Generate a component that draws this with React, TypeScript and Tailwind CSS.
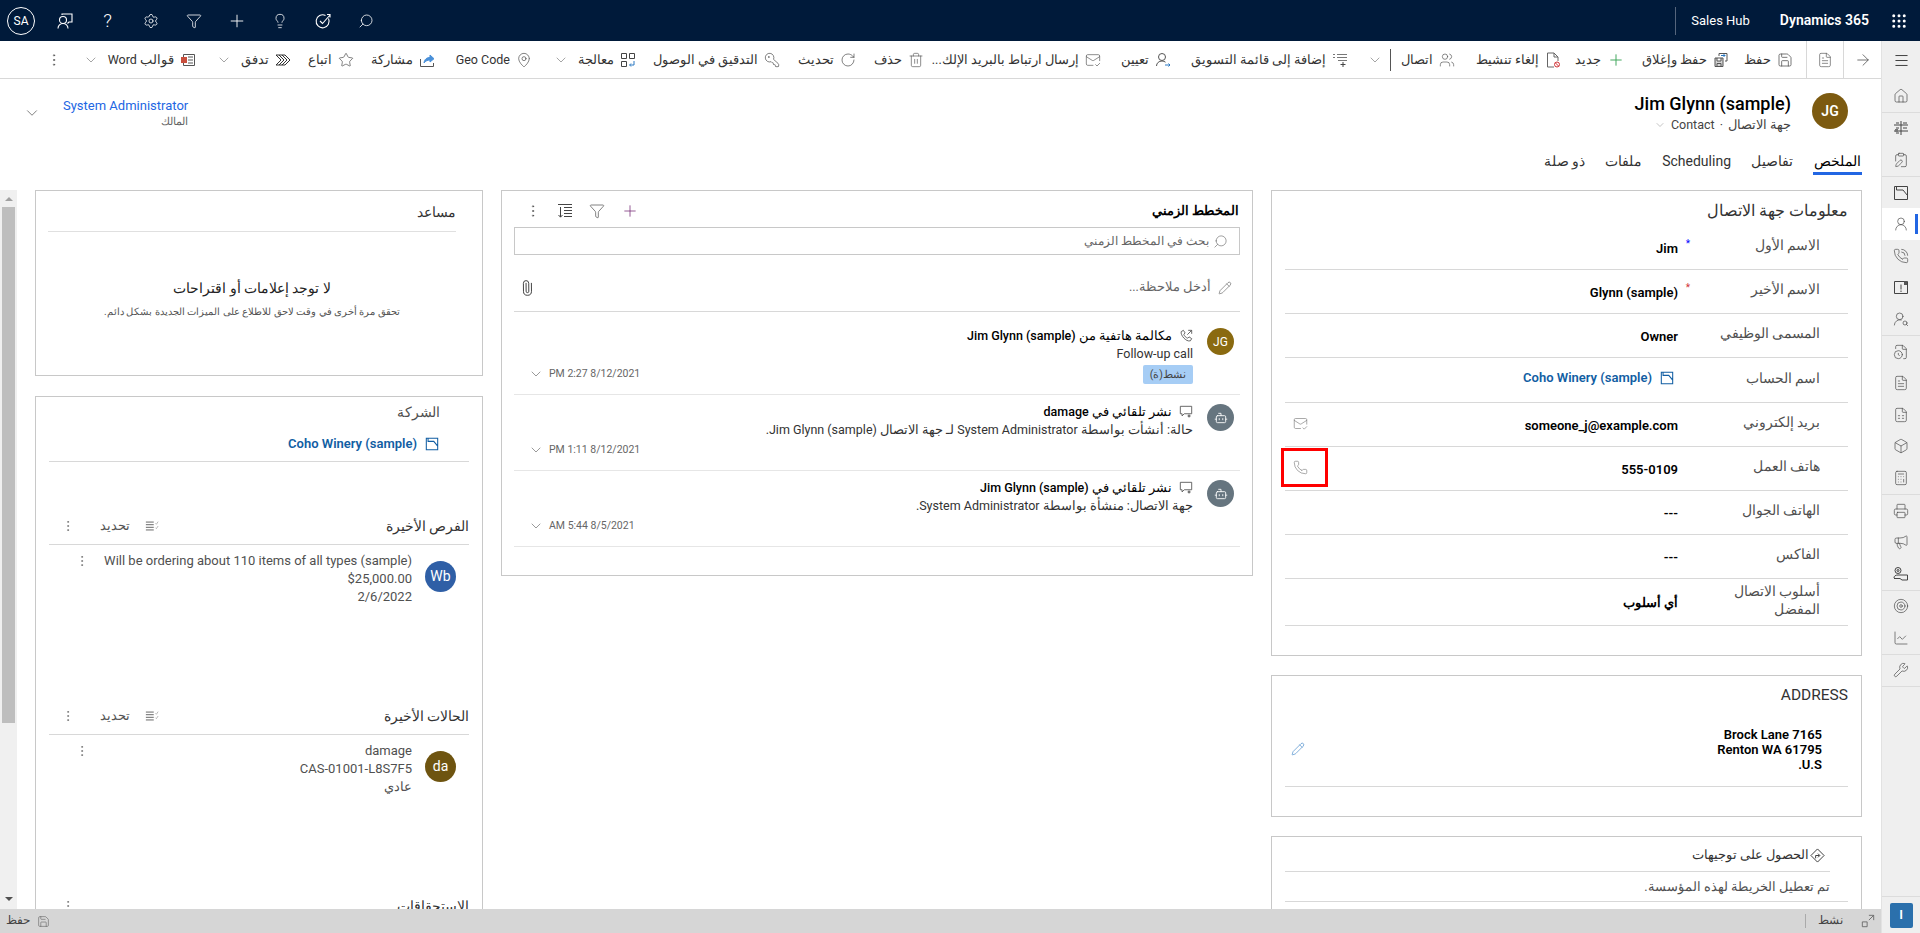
import type { ReactNode } from "react";
import {
  Box,
  Calculator,
  ChartLine,
  ChevronDown,
  EllipsisVertical,
  FileClock,
  FileSpreadsheet,
  FileText,
  Filter,
  Home,
  KeyRound,
  Lightbulb,
  MailCheck,
  MapPin,
  Megaphone,
  Menu,
  Paperclip,
  Pencil,
  Phone,
  PhoneCall,
  Plus,
  RotateCw,
  Save,
  Search,
  Settings,
  Star,
  Target,
  Trash2,
  UserRound,
  UserRoundSearch,
  Users,
  Wrench,
  ClipboardPen,
  Grip,
  ArrowRight,
  Bot,
  Printer,
} from "lucide-react";

function AccountIcon({ className }: { className?: string }) {
  return (
    <svg viewBox="0 0 16 16" className={className} fill="none" stroke="currentColor" strokeWidth="1.2">
      <path d="M1.5 14.5V1.5H14.5V14.5H1.5ZM3.5 1.5V5H10L14.5 10.5" />
    </svg>
  );
}

function ColumnsIcon({ className }: { className?: string }) {
  return (
    <svg viewBox="0 0 16 16" className={className} fill="none" stroke="currentColor" strokeWidth="1">
      <path d="M1 3.500h9M1 6.500h9M1 9.500h9M1 12.500h9" />
      <path d="M12 5l1 1 2-3M12 10l1 1 2-3" stroke="#999" strokeWidth="0.8" />
    </svg>
  );
}

function ProcessIcon() {
  return (
    <svg viewBox="0 0 16 16" className="w-4 h-4" fill="none" stroke="#444" strokeWidth="1">
      <path d="M1.5 1.5h5v5h-5zM1.5 9.5h5v5h-5zM9.500 1.5h5v5h-5z" />
      <path d="M14 9v4h-4M11 11.500 9.500 13l1.500 1.500" stroke="#2b79c2" />
    </svg>
  );
}

function ShareIcon() {
  return (
    <svg viewBox="0 0 16 16" className="w-4 h-4" fill="none" stroke="#555" strokeWidth="1">
      <path d="M1.500 7v7.500h13V11" />
      <path d="M5 11c.5-4 3-5.500 6-5.500V3l4 3.700L11 10V8c-2.500 0-4.500 1-6 3Z" fill="#4a90d9" stroke="#4a90d9" />
    </svg>
  );
}

function FlowIcon() {
  return (
    <svg viewBox="0 0 16 16" className="w-4 h-4" fill="none" stroke="#333" strokeWidth="1">
      <path d="M1 3h9l5 5-5 5H1l5-5-5-5Z" />
      <path d="M4 3l5 5-5 5M7 3l5 5-5 5" />
    </svg>
  );
}

function WordIcon() {
  return (
    <svg viewBox="0 0 16 16" className="w-4 h-4" fill="none" stroke="#555" strokeWidth="1">
      <path d="M3.500 2.500h11v11h-11z" />
      <path d="M8 5h5M8 8h5M8 11h5" />
      <rect x="1" y="5" width="6" height="6" fill="#c94f3d" stroke="none" />
    </svg>
  );
}

function SaveCloseIcon() {
  return (
    <svg viewBox="0 0 16 16" className="w-4 h-4" fill="none" stroke="#555" strokeWidth="1">
      <path d="M2 6h8v8.500H2zM4 6v3h4V6M4 14.500v-3h4v3" fill="#d5d5d5" />
      <path d="M6 4V1.500h8V9h-2" />
      <path d="M8 3.500h4M10.500 2l1.500 1.500L10.500 5" stroke="#2b79c2" />
    </svg>
  );
}

function AssignIcon() {
  return (
    <svg viewBox="0 0 16 16" className="w-4 h-4" fill="none" stroke="#555" strokeWidth="1">
      <circle cx="7" cy="5" r="3.500" />
      <path d="M1.500 14c0-3 2.500-5 5.500-5 1.500 0 2.500.5 3.500 1.200" />
      <path d="M10 13h5M13.500 11.500 15 13l-1.500 1.500" stroke="#2b79c2" />
    </svg>
  );
}

function DeactivateIcon() {
  return (
    <svg viewBox="0 0 16 16" className="w-4 h-4" fill="none" stroke="#666" strokeWidth="1">
      <path d="M9 15H2.500V1H9l4 4v4M9 1v4h4" />
      <circle cx="12" cy="12.500" r="2.500" stroke="#d13438" />
      <path d="M10.300 10.800 13.700 14.200" stroke="#d13438" />
    </svg>
  );
}

function MarketingIcon() {
  return (
    <svg viewBox="0 0 16 16" className="w-4 h-4" fill="none" stroke="#777" strokeWidth="1">
      <path d="M1 2.500h2M5 2.500h10M1 5.500h2M5 5.500h10M6 8.500h9" />
      <path d="M11 10v5M8.500 12.500h5" stroke="#444" />
    </svg>
  );
}

function SortIcon() {
  return (
    <svg viewBox="0 0 16 16" className="w-4 h-4" fill="none" stroke="#444" strokeWidth="1">
      <path d="M1 1.500h14M7 4.500h8M7 7.500h8M7 10.500h8M7 13.500h8" />
      <path d="M3.500 4v10M1.500 12l2 2.200 2-2.200" />
    </svg>
  );
}

function PostIcon() {
  return (
    <svg viewBox="0 0 16 16" className="w-[14px] h-[14px]" fill="none" stroke="#555" strokeWidth="1">
      <path d="M1.500 1.500h13v8.500H6l-2.500 2.500V10h-2z" />
      <circle cx="11.500" cy="12.500" r="1.700" fill="#777" stroke="none" />
    </svg>
  );
}

function CallIcon() {
  return (
    <svg viewBox="0 0 16 16" className="w-[14px] h-[14px]" fill="none" stroke="#555" strokeWidth="1">
      <path d="M5 1.500 2.500 3C1.500 7 8 15 13 13.500L14.500 11l-3-2-1.500 1.500C8 10 6 8 5.500 6L7 4.500 5 1.500Z" />
      <path d="M9.500 6.500 14.500 1.500M10.500 1.500h4v4" />
    </svg>
  );
}

function GetDirectionsIcon() {
  return (
    <svg viewBox="0 0 16 16" className="w-[15px] h-[15px]" fill="none" stroke="#333" strokeWidth="1">
      <path d="M8 1l7 7-7 7-7-7 7-7Z" />
      <path d="M6 11V8h4M8.500 6 10.500 8l-2 2" />
    </svg>
  );
}

function PersonFlagIcon() {
  return (
    <svg viewBox="0 0 16 16" className="w-4 h-4" fill="none" stroke="currentColor" strokeWidth="1.1">
      <circle cx="6" cy="7" r="3.500" />
      <path d="M1 15.500c0-3 2.200-5 5-5s5 2 5 5" />
      <path d="M5 2V1h10v8h-3l-1.500 1.500" />
    </svg>
  );
}

function GoalIcon() {
  return (
    <svg viewBox="0 0 16 16" className="w-4 h-4" fill="none" stroke="currentColor" strokeWidth="1.1">
      <path d="M13.500 5.500a6.500 6.500 0 1 1-3-3" />
      <path d="M5 8l2.500 2.500L15 2M12 1.500h3v3" />
    </svg>
  );
}

function DashboardIcon() {
  return (
    <svg viewBox="0 0 16 16" fill="none" stroke="currentColor">
      <path d="M1 5h14M1 11h14M8 1v14M3 3h3M3 8h3M10 3h4M10 8h4M3 13h3" />
      <rect x="2" y="9" width="3" height="3" fill="#777" stroke="none" />
    </svg>
  );
}

function AlertBoxIcon() {
  return (
    <svg viewBox="0 0 16 16" fill="none" stroke="currentColor">
      <path d="M1.500 2.500h13v12h-13z" />
      <path d="M8 5.500v5M8 11.500v1.500" />
      <rect x="11" y="2" width="3" height="4" fill="#555" stroke="none" />
    </svg>
  );
}

function CompetitorIcon() {
  return (
    <svg viewBox="0 0 16 16" fill="none" stroke="currentColor">
      <circle cx="5" cy="4.500" r="3" />
      <circle cx="5" cy="4.500" r="1" />
      <path d="M1 12c0-2 1.500-3 4-3h9.500v5H9L7 12.500H1" />
    </svg>
  );
}

const commands = [
  { label: "حفظ", w: "w-[64px]", icon: <Save className="w-4 h-4 text-[#555]" strokeWidth={1.2} /> },
  { label: "حفظ وإغلاق", w: "w-[104px]", icon: <SaveCloseIcon /> },
  { label: "جديد", w: "w-[64px]", icon: <Plus className="w-[18px] h-[18px] text-[#3fa65c]" strokeWidth={1.3} /> },
  { label: "إلغاء تنشيط", w: "w-[106px]", icon: <DeactivateIcon /> },
  { label: "اتصال", w: "w-[64px]", icon: <Users className="w-4 h-4 text-[#555]" strokeWidth={1} /> },
];

const commands2 = [
  { label: "إضافة إلى قائمة التسويق", w: "w-[177px]", icon: <MarketingIcon /> },
  { label: "تعيين", w: "w-[70px]", icon: <AssignIcon /> },
  { label: "إرسال ارتباط بالبريد الإلك...", w: "w-[177px]", icon: <MailCheck className="w-4 h-4 text-[#555]" strokeWidth={1} /> },
  { label: "حذف", w: "w-[68px]", icon: <Trash2 className="w-4 h-4 text-[#555]" strokeWidth={1} /> },
  { label: "تحديث", w: "w-[76px]", icon: <RotateCw className="w-4 h-4 text-[#444]" strokeWidth={1} /> },
  { label: "التدقيق في الوصول", w: "w-[144px]", icon: <KeyRound className="w-4 h-4 text-[#444] -scale-x-100" strokeWidth={1} /> },
  { label: "معالجة", w: "w-[104px]", icon: <ProcessIcon />, chevron: true },
  { label: "Geo Code", w: "w-[97px]", icon: <MapPin className="w-4 h-4 text-[#444]" strokeWidth={1} /> },
  { label: "مشاركة", w: "w-[81px]", icon: <ShareIcon /> },
  { label: "اتباع", w: "w-[63px]", icon: <Star className="w-4 h-4 text-[#444]" strokeWidth={1} /> },
  { label: "تدفق", w: "w-[95px]", icon: <FlowIcon />, chevron: true },
  { label: "قوالب Word", w: "w-[134px]", icon: <WordIcon />, chevron: true },
];

const topIcons = [
  <PersonFlagIcon />,
  <span className="text-[19px] leading-none font-light">?</span>,
  <Settings className="w-4 h-4" strokeWidth={1.2} />,
  <Filter className="w-4 h-4" strokeWidth={1.2} />,
  <Plus className="w-[20px] h-[20px]" strokeWidth={1.1} />,
  <Lightbulb className="w-4 h-4" strokeWidth={1.2} />,
  <GoalIcon />,
  <Search className="w-4 h-4 -scale-x-100" strokeWidth={1.2} />,
];

function TopBar() {
  return (
    <header className="h-[41px] bg-[#001a3a] text-white flex items-center justify-between shrink-0 pr-[12px] pl-[7px]">
      <div className="flex items-center">
        <Grip className="w-[18px] h-[18px] ml-[21px]" strokeWidth={2} />
        <span className="text-[14px] font-semibold ml-[30px]">Dynamics 365</span>
        <span className="text-[13px] pl-[15px] border-l border-[#55657c] h-[28px] flex items-center">Sales Hub</span>
      </div>
      <div className="flex items-center flex-row-reverse gap-[8px]">
        <div className="w-[28px] h-[28px] rounded-full border border-white flex items-center justify-center text-[12px]">SA</div>
        <div className="flex flex-row-reverse items-center">
          {topIcons.map((ic, i) => (
            <div key={i} className="w-[43px] flex justify-center">
              {ic}
            </div>
          ))}
        </div>
      </div>
    </header>
  );
}

function CommandItem({ label, w, icon, chevron }: { label: string; w: string; icon: ReactNode; chevron?: boolean }) {
  return (
    <div className={`${w} flex items-center gap-[6px] shrink-0 text-[12.500px] text-[#333] pt-[1px]`}>
      {icon}
      <span className="whitespace-nowrap">{label}</span>
      {chevron && <ChevronDown className="w-4 h-4 text-[#777] mr-[3px]" strokeWidth={1} />}
    </div>
  );
}

function CommandBar() {
  return (
    <div className="h-[38px] border-b border-[#d8d8d8] flex items-stretch shrink-0 bg-white">
      <div className="w-[38px] flex items-center justify-center border-l border-[#d8d8d8]">
        <ArrowRight className="w-[18px] h-[18px] text-[#444]" strokeWidth={1} />
      </div>
      <div className="w-[37px] flex items-center justify-center border-l border-[#d8d8d8]">
        <FileText className="w-4 h-4 text-[#555]" strokeWidth={1} />
      </div>
      <div className="flex items-center pr-[13px]">
        {commands.map((c) => (
          <CommandItem key={c.label} {...c} />
        ))}
        <div className="w-px h-[22px] bg-[#555] shrink-0" />
        <div className="w-[42px] pr-[7px] shrink-0">
          <ChevronDown className="w-4 h-4 text-[#777]" strokeWidth={1} />
        </div>
        {commands2.map((c) => (
          <CommandItem key={c.label} {...c} />
        ))}
        <EllipsisVertical className="w-4 h-4 text-[#555] shrink-0" strokeWidth={1.2} />
      </div>
    </div>
  );
}

function RecordHeader() {
  return (
    <div className="h-[101px] shrink-0">
      <div className="flex justify-between pr-[33px] pl-[23px] pt-[13px]">
        <div className="flex gap-[21px]">
          <div className="w-9 h-9 rounded-full bg-[#7c5a10] text-white text-[14px] font-semibold flex items-center justify-center mt-[1px]">JG</div>
          <div>
            <div className="text-[18px] leading-[24px] font-medium text-black" dir="ltr">Jim Glynn (sample)</div>
            <div className="flex items-center gap-[5px] text-[12.500px] leading-[18px] text-[#444]">
              <span>جهة الاتصال</span>
              <span>·</span>
              <span>Contact</span>
              <ChevronDown className="w-3 h-3 text-[#888]" strokeWidth={1} />
            </div>
          </div>
        </div>
        <div className="flex items-center gap-[22px] h-[32px] mt-[5px]">
          <div>
            <div className="text-[13px] leading-[18px] text-[#2266e3]">System Administrator</div>
            <div className="text-[10.500px] leading-[14px] text-[#666]">المالك</div>
          </div>
          <ChevronDown className="w-[18px] h-[18px] text-[#555]" strokeWidth={1} />
        </div>
      </div>
      <nav className="flex gap-[20px] pr-[19px] mt-[17px] text-[14px] text-[#333]">
        <span className="relative text-black px-[1px] pb-[1px]">
          الملخص
          <span className="absolute right-0 left-0 -bottom-[2px] h-[3px] bg-[#2266e3]" />
        </span>
        <span>تفاصيل</span>
        <span>Scheduling</span>
        <span>ملفات</span>
        <span>ذو صلة</span>
      </nav>
    </div>
  );
}

const contactRows = [
  { label: "الاسم الأول", value: "Jim", mark: "blue", h: "h-[44px]" },
  { label: "الاسم الأخير", value: "Glynn (sample)", mark: "red", h: "h-[44px]" },
  { label: "المسمى الوظيفي", value: "Owner", h: "h-[44px]" },
  { label: "اسم الحساب", value: "Coho Winery (sample)", link: true, h: "h-[45px]" },
  { label: "بريد إلكتروني", value: "someone_j@example.com", side: "mail", h: "h-[44px]" },
  { label: "هاتف العمل", value: "555-0109", side: "phone", h: "h-[44px]" },
  { label: "الهاتف الجوال", value: "---", h: "h-[44px]" },
  { label: "الفاكس", value: "---", h: "h-[44px]" },
  { label: "أسلوب الاتصال المفضل", value: "أي أسلوب", h: "h-[47px]" },
];

function ContactCard() {
  return (
    <section className="border border-[#c8c8c8] h-[466px] px-[13px] shrink-0">
      <h2 className="text-[15.500px] font-normal text-[#333] h-[35px] pt-[8px] leading-[24px]">معلومات جهة الاتصال</h2>
      {contactRows.map((r) => (
        <div key={r.label} className={`${r.h} border-b border-[#d8d8d8] flex items-center pr-[28px] relative`}>
          <div className="w-[130px] text-[13.500px] leading-[18px] text-[#505050] pb-[5px] shrink-0">{r.label}</div>
          <div className="w-[12px] shrink-0 text-[10px] pb-[8px]">
            {r.mark === "blue" && <span className="text-[#0000ff]">*</span>}
            {r.mark === "red" && <span className="text-[#d13438]">*</span>}
          </div>
          <div className="flex-1 min-w-0">
            {r.link ? (
              <span className="inline-flex items-center gap-[8px] mr-[4px] text-[13px] font-semibold text-[#115ea3]">
                <AccountIcon className="w-[14px] h-[14px]" />
                {r.value}
              </span>
            ) : (
              <span className="text-[13px] font-semibold text-black">{r.value}</span>
            )}
          </div>
          <div className="w-[14px] ml-[9px] shrink-0 text-[#777] pb-[3px]">
            {r.side === "mail" && <MailCheck className="w-[15px] h-[15px]" strokeWidth={1} />}
            {r.side === "phone" && <Phone className="w-[15px] h-[15px]" strokeWidth={1} />}
          </div>
          {r.side === "phone" && (
            <div className="absolute left-[-4px] top-[1px] w-[47px] h-[39px] border-[3px] border-[#ff0000]" />
          )}
        </div>
      ))}
    </section>
  );
}

function AddressCard() {
  return (
    <section className="border border-[#c8c8c8] h-[142px] px-[13px] shrink-0">
      <h2 className="text-[15.500px] font-normal text-[#333] h-[36px] pt-[7px] leading-[24px]">ADDRESS</h2>
      <div className="h-[75px] border-b border-[#d8d8d8] flex items-center justify-between pr-[26px] pl-[6px]">
        <div className="text-[13px] font-semibold text-black leading-[15px] pt-[1px]">
          <div>7165 Brock Lane</div>
          <div>Renton WA 61795</div>
          <div>U.S.</div>
        </div>
        <Pencil className="w-[14px] h-[14px] text-[#2b79c2]" strokeWidth={1} />
      </div>
    </section>
  );
}

function DirectionsCard() {
  return (
    <section className="border border-[#c8c8c8] h-[120px] px-[13px] shrink-0">
      <div className="h-[35px] mr-[18px] w-[545px] border-b border-[#d8d8d8] flex items-center gap-[1px] pr-[5px] pt-[2px] text-[12.500px] text-[#333]">
        <GetDirectionsIcon />
        الحصول على توجيهات
      </div>
      <div className="h-[30px] border-b border-[#d8d8d8] flex items-center pr-[18px] pt-[2px] text-[12.500px] text-[#505050]">
        تم تعطيل الخريطة لهذه المؤسسة.
      </div>
    </section>
  );
}

function TimelineItem({
  avatar,
  icon,
  title,
  sub,
  badge,
  date,
  first,
}: {
  avatar: ReactNode;
  icon: ReactNode;
  title: string;
  sub: string;
  badge?: string;
  date: string;
  first?: boolean;
}) {
  return (
    <div className={`${first ? "h-[83px] pt-[15px]" : "h-[76px] pt-[8px]"} border-b border-[#e6e6e6] mx-[12px] flex pr-[6px] relative`}>
      <div className="w-[27px] shrink-0 mt-[1px]">{avatar}</div>
      <div className="mr-[14px] flex-1">
        <div className="flex items-center gap-[7px] text-[12.500px] leading-[18px] font-medium text-black">
          {icon}
          <span>{title}</span>
        </div>
        <div className="text-[12.500px] leading-[18px] text-[#333]">{sub}</div>
        {badge && (
          <div className="w-fit bg-[#a6cdf5] rounded-[2px] text-[10.500px] leading-[19px] px-[7px] mt-[2px] text-[#444]">{badge}</div>
        )}
      </div>
      <div className="absolute left-[14px] bottom-[12px] flex items-center gap-[5px] text-[10.500px] text-[#666]">
        <span>{date}</span>
        <ChevronDown className="w-4 h-4 text-[#666]" strokeWidth={1} />
      </div>
    </div>
  );
}

function BotAvatar() {
  return (
    <div className="w-[27px] h-[27px] rounded-full bg-[#66757f] flex items-center justify-center">
      <Bot className="w-[14px] h-[14px] text-white" strokeWidth={1.5} />
    </div>
  );
}

function TimelineCard() {
  return (
    <section className="border border-[#c8c8c8] h-[386px] shrink-0">
      <div className="h-[36px] flex items-center justify-between pr-[13px] pl-[21px] pt-[4px]">
        <h2 className="text-[12.500px] font-semibold text-black">المخطط الزمني</h2>
        <div className="flex items-center gap-[16px]">
          <Plus className="w-[18px] h-[18px] text-[#742774]" strokeWidth={1} />
          <Filter className="w-4 h-4 text-[#444]" strokeWidth={1} />
          <SortIcon />
          <EllipsisVertical className="w-4 h-4 ml-[2px] text-[#444]" strokeWidth={1} />
        </div>
      </div>
      <div className="h-[28px] mx-[12px] border border-[#c8c8c8] flex items-center gap-[4px] pr-[11px] text-[12px] text-[#666]">
        <Search className="w-[15px] h-[15px] -scale-x-100" strokeWidth={1} />
        بحث في المخطط الزمني
      </div>
      <div className="h-[57px] mx-[12px] border-b border-[#d8d8d8] flex items-center justify-between pr-[8px] pl-[5px] pt-[9px] text-[12.500px] text-[#666]">
        <span className="flex items-center gap-[7px]">
          <Pencil className="w-[14px] h-[14px] text-[#555]" strokeWidth={1} />
          أدخل ملاحظة...
        </span>
        <Paperclip className="w-[16px] h-[16px] text-[#333] -rotate-45" strokeWidth={1.3} />
      </div>
      <TimelineItem
        first
        avatar={<div className="w-[27px] h-[27px] rounded-full bg-[#8a6a10] text-white text-[12px] flex items-center justify-center">JG</div>}
        icon={<CallIcon />}
        title="مكالمة هاتفية من Jim Glynn (sample)"
        sub="Follow-up call"
        badge="نشط(ة)"
        date="8/12/2021 2:27 PM"
      />
      <TimelineItem
        avatar={<BotAvatar />}
        icon={<PostIcon />}
        title="نشر تلقائي في damage"
        sub="حالة: أنشأت بواسطة System Administrator لـ جهة الاتصال Jim Glynn (sample)."
        date="8/12/2021 1:11 PM"
      />
      <TimelineItem
        avatar={<BotAvatar />}
        icon={<PostIcon />}
        title="نشر تلقائي في Jim Glynn (sample)"
        sub="جهة الاتصال: منشأة بواسطة System Administrator."
        date="8/5/2021 5:44 AM"
      />
    </section>
  );
}

function AssistantCard() {
  return (
    <section className="border border-[#c8c8c8] h-[186px] px-[13px] shrink-0">
      <div className="mr-[13px] w-[408px]">
        <div className="h-[41px] border-b border-[#e0e0e0] pt-[11px] text-[13.500px] leading-[20px] text-[#333]">مساعد</div>
        <div className="text-center mt-[45px]">
          <div className="text-[13.500px] leading-[22px] font-medium text-[#222]">لا توجد إعلامات أو اقتراحات</div>
          <div className="text-[10px] leading-[16px] mt-[5px] text-[#555]">تحقق مرة أخرى في وقت لاحق للاطلاع على الميزات الجديدة بشكل دائم.</div>
        </div>
      </div>
    </section>
  );
}

function SubgridHeader({ title, noSelect }: { title: string; noSelect?: boolean }) {
  return (
    <div className="h-[29px] border-b border-[#d8d8d8] flex items-center justify-between pb-[8px] text-[13.500px] text-[#333]">
      <span>{title}</span>
      <div className="flex items-center text-[12.500px] text-[#555] pl-[12px]">
        {!noSelect && (
          <>
            <ColumnsIcon className="w-[14px] h-[14px]" />
            <span className="mr-[15px] ml-[25px]">تحديد</span>
          </>
        )}
        <EllipsisVertical className="w-[14px] h-[14px]" strokeWidth={1} />
      </div>
    </div>
  );
}

function SubgridRow({ initials, bg, lines }: { initials: string; bg: string; lines: string[] }) {
  return (
    <div className="flex pt-[7px] h-[161px] items-start">
      <div className={`w-[31px] h-[31px] rounded-full ${bg} mr-[13px] mt-[9px] text-white text-[14px] flex items-center justify-center shrink-0`}>{initials}</div>
      <div className="flex-1 mr-[13px] text-[13px] leading-[18px] text-[#505050]">
        {lines.map((l) => (
          <div key={l}>{l}</div>
        ))}
      </div>
      <EllipsisVertical className="w-[14px] h-[14px] text-[#555] ml-[26px] mt-[2px] shrink-0" strokeWidth={1} />
    </div>
  );
}

function RelatedCard() {
  return (
    <section className="border border-[#c8c8c8] px-[13px] flex-1">
      <div className="h-[65px] border-b border-[#d8d8d8] pr-[29px] pt-[4px]">
        <div className="text-[13.500px] leading-[22px] text-[#505050]">الشركة</div>
        <div className="inline-flex items-center gap-[8px] mt-[11px] mr-[1px] text-[13px] font-semibold text-[#115ea3]">
          <AccountIcon className="w-[14px] h-[14px]" />
          Coho Winery (sample)
        </div>
      </div>
      <div className="mt-[54px]">
        <SubgridHeader title="الفرص الأخيرة" />
        <SubgridRow
          initials="Wb"
          bg="bg-[#2f5fa6]"
          lines={["Will be ordering about 110 items of all types (sample)", "$25,000.00", "2/6/2022"]}
        />
      </div>
      <SubgridHeader title="الحالات الأخيرة" />
      <SubgridRow initials="da" bg="bg-[#6e5410]" lines={["damage", "CAS-01001-L8S7F5", "عادي"]} />
      <SubgridHeader title="الاستحقاقات" noSelect />
    </section>
  );
}

function Scrollbar() {
  return (
    <div className="w-[17px] bg-[#f0f0f0] shrink-0 flex flex-col items-center">
      <div className="h-[17px] flex items-center justify-center pt-[1px]">
        <div className="w-0 h-0 border-x-[4px] border-x-transparent border-b-[4px] border-b-[#a0a0a0]" />
      </div>
      <div className="w-[13px] h-[516px] bg-[#bebebe]" />
      <div className="flex-1 flex items-end pb-[8px]">
        <div className="w-0 h-0 border-x-[4px] border-x-transparent border-t-[4px] border-t-[#505050]" />
      </div>
    </div>
  );
}

const navGroups = [
  [<Home />],
  [<DashboardIcon />, <ClipboardPen />],
  [<AccountIcon />, <UserRound />, <PhoneCall />, <AlertBoxIcon />, <UserRoundSearch />],
  [<FileClock />, <FileText />, <FileSpreadsheet />, <Box />, <Calculator />],
  [<Printer />, <Megaphone />, <CompetitorIcon />],
  [<Target />, <ChartLine />],
  [<Wrench />],
];

function SideNav() {
  return (
    <aside className="w-[39px] bg-[#efefef] border-l border-[#e2e2e2] shrink-0 flex flex-col">
      <div className="h-[39px] flex items-center justify-center shrink-0">
        <Menu className="w-[17px] h-[17px] text-[#222]" strokeWidth={1.2} />
      </div>
      {navGroups.map((group, i) => (
        <div key={i} className="border-b border-[#dcdcdc] [&_svg]:w-4 [&_svg]:h-4 [&_svg]:stroke-1 text-[#444]">
          {group.map((ic, j) => (
            <div
              key={j}
              className={`h-[31.600px] flex items-center justify-center relative ${i === 2 && j === 1 ? "bg-white" : ""}`}
            >
              {ic}
              {i === 2 && j === 1 && <span className="absolute right-[2px] top-[6px] h-[20px] w-[3px] bg-[#2266e3]" />}
            </div>
          ))}
        </div>
      ))}
      <div className="flex-1" />
      <div className="h-[37px] border-t border-[#dcdcdc] flex items-center justify-center">
        <div className="w-[23px] h-[25px] rounded-[2px] bg-[#2b70ac] text-white text-[13px] font-semibold flex items-center justify-center">I</div>
      </div>
    </aside>
  );
}

function StatusBar() {
  return (
    <footer className="h-[24px] bg-[#d6d6d6] shrink-0 flex items-center justify-between pr-[6px] pl-[6px] text-[11.500px] text-[#444]">
      <div className="flex items-center">
        <svg viewBox="0 0 16 16" className="w-[14px] h-[14px]" fill="none" stroke="#666" strokeWidth="1">
          <path d="M9 1.500h5.500V7M14.500 1.500 9 7M7 14.500H1.500V9M7 9v5.500M1.500 9H7" />
        </svg>
        <span className="mr-[18px] ml-[12px]">نشط</span>
        <span className="w-px h-[14px] bg-[#aaa]" />
      </div>
      <div className="flex items-center gap-[7px]">
        <Save className="w-[13px] h-[13px] text-[#555]" strokeWidth={1} />
        <span>حفظ</span>
      </div>
    </footer>
  );
}

export default function App() {
  return (
    <div dir="rtl" className="font-['Roboto','Noto_Sans',sans-serif] h-[933px] w-[1920px] overflow-hidden bg-white flex flex-col">
      <TopBar />
      <div className="flex flex-1 min-h-0">
        <SideNav />
        <div className="flex-1 min-w-0 flex flex-col">
          <CommandBar />
          <RecordHeader />
          <main className="flex-1 min-h-0 flex gap-[18px] pr-[19px] overflow-hidden pt-[10px]">
            <div className="w-[591px] flex flex-col gap-[19px] shrink-0">
              <ContactCard />
              <AddressCard />
              <DirectionsCard />
            </div>
            <div className="w-[752px] shrink-0">
              <TimelineCard />
            </div>
            <div className="w-[448px] flex flex-col gap-[20px] shrink-0">
              <AssistantCard />
              <RelatedCard />
            </div>
            <Scrollbar />
          </main>
          <StatusBar />
        </div>
      </div>
    </div>
  );
}
